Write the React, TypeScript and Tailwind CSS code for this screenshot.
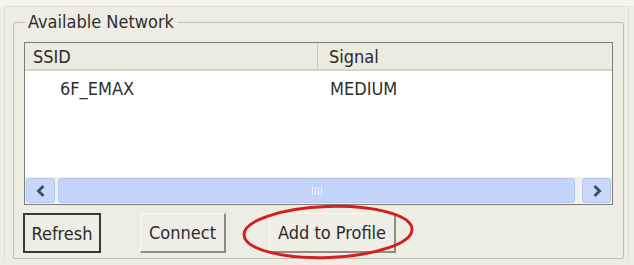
import React from 'react';

const font = { fontFamily: '"DejaVu Sans Condensed", "DejaVu Sans", Tahoma, sans-serif' };

const ArrowButton: React.FC<{ dir: 'left' | 'right' }> = ({ dir }) => (
  <div className="w-[29px] h-[25px] rounded-[3px] border border-[#b7c8f0] bg-[#c8d7fa] flex items-center justify-center">
    <svg width="12" height="14" viewBox="0 0 12 14">
      <path
        d={dir === 'left' ? 'M8.5 2 L3.5 7 L8.5 12' : 'M3.5 2 L8.5 7 L3.5 12'}
        fill="none"
        stroke="#3a4f7c"
        strokeWidth="3"
      />
    </svg>
  </div>
);

const XpButton: React.FC<{ label: string; width: string; isDefault?: boolean }> = ({ label, width, isDefault }) => (
  <button
    className={`${width} h-[40px] bg-[#efeee6] text-[18px] text-[#2a2a2a] flex items-center justify-center ${
      isDefault
        ? 'border-2 border-[#3a3a34]'
        : 'border-t border-l border-t-[#fbfbf6] border-l-[#fbfbf6] border-r-2 border-b-2 border-r-[#8e8d84] border-b-[#8e8d84]'
    }`}
  >
    {label}
  </button>
);

export default function App() {
  return (
    <div className="relative w-[634px] h-[265px] bg-[#eeede3] overflow-hidden" style={font}>
      <div className="absolute left-0 top-0 right-0 h-[6px] bg-[#f5f4ee]" />
      <div className="absolute left-[4px] top-[6px] right-[5px] bottom-[3px] border-l border-t border-r border-[#e0ded1]" />
      <div className="relative pl-[13px] pt-[12px] w-[623px]">
        <fieldset className="border border-[#c3c1b3] rounded-[2px] h-[247px] px-[10px]">
          <legend className="ml-[1px] px-[3px] text-[18px] leading-[20px] text-[#2e2e2e]">Available Network</legend>
          <div className="mt-[10px] w-[589px] h-[163px] border border-[#7e7d74] bg-white flex flex-col">
            <div className="h-[28px] flex bg-[#ecebdf] border-b-2 border-[#d6d4c6] text-[18px] text-[#2a2a2a]">
              <div className="w-[293px] border-r border-[#c9c7ba] pl-[8px] flex items-center">SSID</div>
              <div className="flex-1 pl-[11px] flex items-center">Signal</div>
            </div>
            <div className="flex-1 flex text-[18px] text-[#2e2e2e] pt-[8px]">
              <div className="w-[293px] pl-[35px] h-[20px] leading-[20px]">6F_EMAX</div>
              <div className="flex-1 pl-[12px] h-[20px] leading-[20px]">MEDIUM</div>
            </div>
            <div className="h-[27px] flex items-center px-[1px] gap-[3px] bg-[#f1f1ec]">
              <ArrowButton dir="left" />
              <div className="w-[517px] h-[25px] rounded-[3px] border border-[#b4c6f2] bg-[#c4d4fb] flex items-center justify-center">
                <div className="flex gap-[2px]">
                  <span className="w-[1px] h-[8px] bg-[#eef2fe]" />
                  <span className="w-[1px] h-[8px] bg-[#eef2fe]" />
                  <span className="w-[1px] h-[8px] bg-[#eef2fe]" />
                  <span className="w-[1px] h-[8px] bg-[#eef2fe]" />
                </div>
              </div>
              <div className="flex-1" />
              <ArrowButton dir="right" />
            </div>
          </div>
          <div className="mt-[8px] flex items-center">
            <div className="-ml-[1px]">
              <XpButton label="Refresh" width="w-[78px]" isDefault />
            </div>
            <div className="ml-[39px]">
              <XpButton label="Connect" width="w-[86px]" />
            </div>
            <div className="ml-[43px]">
              <XpButton label="Add to Profile" width="w-[127px]" />
            </div>
          </div>
        </fieldset>
      </div>
      <svg className="absolute left-[240px] top-[202px]" width="176" height="60" viewBox="0 0 176 60">
        <ellipse cx="88" cy="30" rx="84" ry="25.5" fill="none" stroke="#d41f1f" strokeWidth="3" transform="rotate(-2 88 30)" />
      </svg>
    </div>
  );
}
